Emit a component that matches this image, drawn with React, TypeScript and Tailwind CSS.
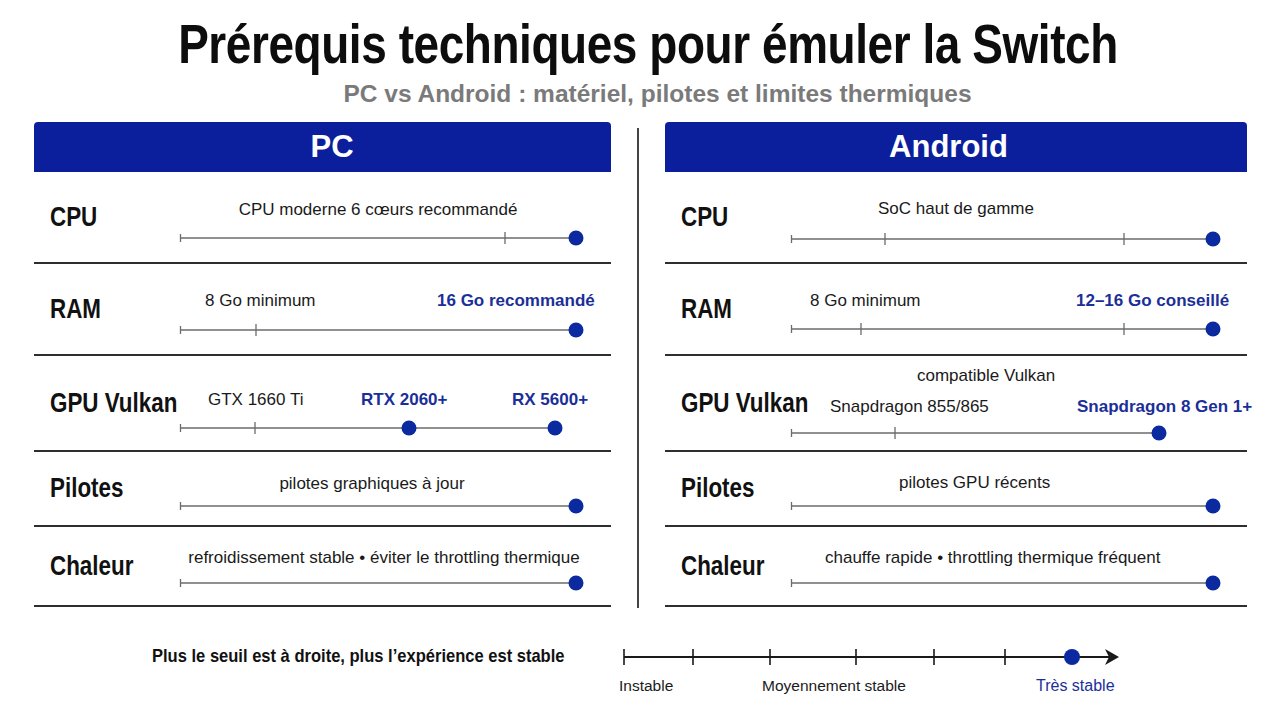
import React from "react";

type Mark = { x: number; kind: "tick" | "dot" };
type Label = { text: string; x: number; y: number; blue?: boolean; center?: boolean };
type Row = { name: string; h: string; trackY: number; end: number; marks: Mark[]; labels: Label[] };

const pcRows: Row[] = [
  {
    name: "CPU",
    h: "h-[92px]",
    trackY: 66,
    end: 396,
    marks: [{ x: 325, kind: "tick" }, { x: 396, kind: "dot" }],
    labels: [{ text: "CPU moderne 6 cœurs recommandé", x: 198, y: 37, center: true }],
  },
  {
    name: "RAM",
    h: "h-[92px]",
    trackY: 66,
    end: 396,
    marks: [{ x: 76, kind: "tick" }, { x: 396, kind: "dot" }],
    labels: [
      { text: "8 Go minimum", x: 25, y: 36 },
      { text: "16 Go recommandé", x: 257, y: 36, blue: true },
    ],
  },
  {
    name: "GPU Vulkan",
    h: "h-[96px]",
    trackY: 72,
    end: 375,
    marks: [{ x: 75, kind: "tick" }, { x: 229, kind: "dot" }, { x: 375, kind: "dot" }],
    labels: [
      { text: "GTX 1660 Ti", x: 28, y: 43 },
      { text: "RTX 2060+", x: 181, y: 43, blue: true },
      { text: "RX 5600+", x: 332, y: 43, blue: true },
    ],
  },
  {
    name: "Pilotes",
    h: "h-[75px]",
    trackY: 54,
    end: 396,
    marks: [{ x: 396, kind: "dot" }],
    labels: [{ text: "pilotes graphiques à jour", x: 192, y: 31, center: true }],
  },
  {
    name: "Chaleur",
    h: "h-[80px]",
    trackY: 56,
    end: 396,
    marks: [{ x: 396, kind: "dot" }],
    labels: [{ text: "refroidissement stable • éviter le throttling thermique", x: 204, y: 30, center: true }],
  },
];

const androidRows: Row[] = [
  {
    name: "CPU",
    h: "h-[92px]",
    trackY: 67,
    end: 422,
    marks: [{ x: 94, kind: "tick" }, { x: 333, kind: "tick" }, { x: 422, kind: "dot" }],
    labels: [{ text: "SoC haut de gamme", x: 87, y: 36 }],
  },
  {
    name: "RAM",
    h: "h-[92px]",
    trackY: 65,
    end: 422,
    marks: [{ x: 70, kind: "tick" }, { x: 333, kind: "tick" }, { x: 422, kind: "dot" }],
    labels: [
      { text: "8 Go minimum", x: 19, y: 36 },
      { text: "12–16 Go conseillé", x: 285, y: 36, blue: true },
    ],
  },
  {
    name: "GPU Vulkan",
    h: "h-[96px]",
    trackY: 77,
    end: 368,
    marks: [{ x: 104, kind: "tick" }, { x: 368, kind: "dot" }],
    labels: [
      { text: "compatible Vulkan", x: 126, y: 19 },
      { text: "Snapdragon 855/865", x: 39, y: 50 },
      { text: "Snapdragon 8 Gen 1+", x: 286, y: 50, blue: true },
    ],
  },
  {
    name: "Pilotes",
    h: "h-[75px]",
    trackY: 54,
    end: 422,
    marks: [{ x: 422, kind: "dot" }],
    labels: [{ text: "pilotes GPU récents", x: 108, y: 30 }],
  },
  {
    name: "Chaleur",
    h: "h-[80px]",
    trackY: 56,
    end: 422,
    marks: [{ x: 422, kind: "dot" }],
    labels: [{ text: "chauffe rapide • throttling thermique fréquent", x: 34, y: 30 }],
  },
];

function Track({ row }: { row: Row }) {
  return (
    <div className="relative flex-1 self-stretch">
      <svg className="absolute inset-0 h-full w-full overflow-visible">
        <line x1={0} y1={row.trackY} x2={row.end} y2={row.trackY} stroke="#6b6b6b" strokeWidth={1.6} />
        <line x1={0.5} y1={row.trackY - 4} x2={0.5} y2={row.trackY + 4} stroke="#6b6b6b" strokeWidth={1.3} />
        {row.marks.map((m, i) =>
          m.kind === "tick" ? (
            <line key={i} x1={m.x} y1={row.trackY - 6} x2={m.x} y2={row.trackY + 6} stroke="#6b6b6b" strokeWidth={1.3} />
          ) : (
            <circle key={i} cx={m.x} cy={row.trackY} r={7.5} fill="#0b2a9f" />
          )
        )}
      </svg>
      {row.labels.map((l, i) => (
        <span
          key={i}
          className={`absolute -translate-y-1/2 whitespace-nowrap text-[17px] leading-none ${
            l.center ? "-translate-x-1/2" : ""
          } ${l.blue ? "font-bold text-[#1b2f98]" : "text-[#1a1a1a]"}`}
          style={{ left: l.x, top: l.y }}
        >
          {l.text}
        </span>
      ))}
    </div>
  );
}

function Panel({ title, rows, labelW, headPad }: { title: string; rows: Row[]; labelW: string; headPad: string }) {
  return (
    <div className="flex flex-col">
      <div className={`flex h-[50px] items-center justify-center rounded-t-[4px] bg-[#0b1f9c] ${headPad}`}>
        <span className="text-[31px] font-bold leading-none text-white">{title}</span>
      </div>
      {rows.map((r) => (
        <div key={r.name} className={`flex ${r.h} items-center border-b-2 border-[#2e2e2e]`}>
          <div className={`${labelW} shrink-0 pl-4 text-[28px] font-bold leading-none text-[#111]`}>
            <span className="inline-block origin-left scale-x-[0.8] whitespace-nowrap">{r.name}</span>
          </div>
          <Track row={r} />
        </div>
      ))}
    </div>
  );
}

function Scale() {
  const ticks = [10, 79, 156, 242, 320, 391];
  return (
    <div className="relative h-[60px] w-[510px]">
      <svg className="absolute inset-0 h-full w-full overflow-visible">
        <line x1={10} y1={12} x2={500} y2={12} stroke="#1a1a1a" strokeWidth={2} />
        {ticks.map((t) => (
          <line key={t} x1={t} y1={4} x2={t} y2={20} stroke="#1a1a1a" strokeWidth={1.6} />
        ))}
        <path d="M491 4 L505 12 L491 20 L495 12 Z" fill="#1a1a1a" />
        <circle cx={458} cy={12} r={8} fill="#0b2a9f" />
      </svg>
      <span className="absolute left-[5px] top-[33px] text-[15.5px] leading-none text-[#1a1a1a]">Instable</span>
      <span className="absolute left-[148px] top-[33px] text-[15.5px] leading-none text-[#1a1a1a]">Moyennement stable</span>
      <span className="absolute left-[422px] top-[33px] text-[16px] leading-none text-[#1b2f98]">Très stable</span>
    </div>
  );
}

export default function App() {
  return (
    <div className="h-[720px] w-[1280px] overflow-hidden bg-white font-['Liberation_Sans',Arial,sans-serif]">
      <div className="flex flex-col items-center pt-[16px]">
        <h1 className="ml-[15px] scale-x-[0.82] whitespace-nowrap text-[56px] font-bold leading-none tracking-[-0.5px] text-[#0d0d0d]">
          Prérequis techniques pour émuler la Switch
        </h1>
        <p className="mt-[10px] ml-[35px] text-[24.5px] font-bold leading-none text-[#7a7a7a]">
          PC vs Android : matériel, pilotes et limites thermiques
        </p>
      </div>
      <div className="mt-[15px] flex pl-[34px] pr-[33px]">
        <div className="w-[577px]">
          <Panel title="PC" rows={pcRows} labelW="w-[146px]" headPad="pl-[19px]" />
        </div>
        <div className="flex w-[54px] justify-center pt-[6px]">
          <div className="h-[480px] w-[2px] bg-[#444]" />
        </div>
        <div className="flex-1">
          <Panel title="Android" rows={androidRows} labelW="w-[126px]" headPad="pr-[15px]" />
        </div>
      </div>
      <div className="flex items-start pl-[152px] pt-[37px]">
        <div className="w-[462px] shrink-0">
          <p className="inline-block origin-left scale-x-[0.87] whitespace-nowrap text-[19px] font-bold leading-none text-[#111]">
            Plus le seuil est à droite, plus l’expérience est stable
          </p>
        </div>
        <Scale />
      </div>
    </div>
  );
}
